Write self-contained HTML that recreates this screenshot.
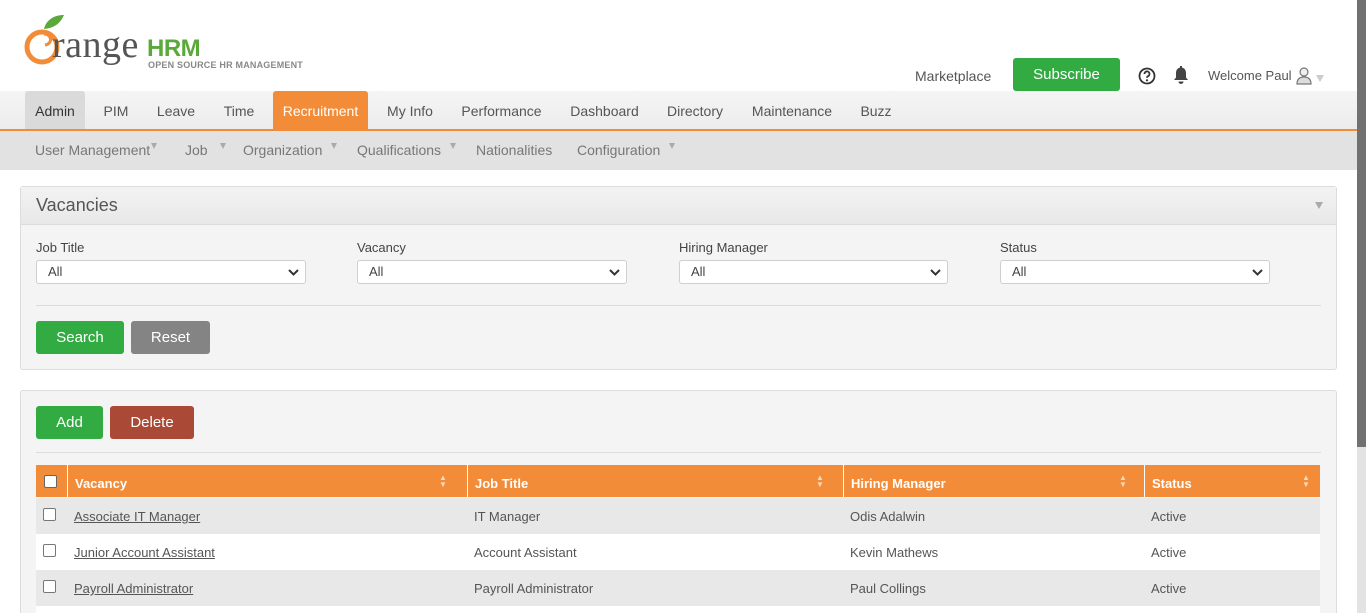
<!DOCTYPE html>
<html><head><meta charset="utf-8"><style>
*{box-sizing:border-box;margin:0;padding:0}
html,body{width:1366px;height:613px;overflow:hidden}
body{background:#fff;font-family:"Liberation Sans",Arial,sans-serif;position:relative;color:#444}
.a{position:absolute}
.menu{left:0;top:91px;width:1357px;height:38px;background:linear-gradient(#f5f5f5,#ececec)}
.menu span{position:absolute;top:0;height:38px;line-height:40px;font-size:14px;color:#555;text-align:center}
.oline{left:0;top:129px;width:1357px;height:2px;background:#f28c38}
.sub{left:0;top:131px;width:1357px;height:39px;background:#e2e2e2}
.sub > span{position:absolute;top:0;line-height:39px;font-size:14px;color:#777}
.tri{display:inline-block;width:0;height:0;border-left:3.5px solid transparent;border-right:3.5px solid transparent;border-top:6px solid #aaa;vertical-align:6px;margin-left:1px}
.panel{background:#f4f4f4;border:1px solid #dcdcdc;border-radius:3px}
.lbl{font-size:13px;color:#444}
.sel{height:24px;background:#fff;border:1px solid #cfcfcf;border-radius:3px;font-size:13px;color:#444;padding-left:11px;line-height:22px}
.sel svg{position:absolute;right:6px;top:8px}
.btn{color:#fff;font-size:15px;text-align:center;border-radius:3px;line-height:33px;height:33px}
.sa{font-size:8px;line-height:7px;color:#fbd9bc}
</style></head><body>
<!-- logo -->
<svg class="a" style="left:24px;top:12px" width="50" height="55" viewBox="0 0 50 55">
<path d="M20 17 C22 8 30 3 40 3 C36 12 30 16 20 17Z" fill="#5aa93a"/>
<circle cx="18" cy="35" r="15" fill="none" stroke="#f28c38" stroke-width="5"/>
<path d="M20 22 C28 22 29 32 21 33" fill="none" stroke="#f28c38" stroke-width="3"/>
</svg>
<div class="a" style="left:52px;top:23px;font-family:'Liberation Serif',serif;font-size:38px;color:#555;letter-spacing:0.5px">range</div>
<div class="a" style="left:147px;top:35px;font-size:24px;color:#5aa93a;font-weight:bold;letter-spacing:-0.5px">HRM</div>
<div class="a" style="left:148px;top:60px;font-size:9px;color:#888;font-weight:bold;letter-spacing:0.2px">OPEN SOURCE HR MANAGEMENT</div>

<div class="a" style="left:915px;top:68px;font-size:14px;color:#555">Marketplace</div>
<div class="a btn" style="left:1013px;top:58px;width:107px;height:33px;line-height:33px;background:#32ab42;font-size:15px">Subscribe</div>
<svg class="a" style="left:1138px;top:67px" width="18" height="18" viewBox="0 0 18 18"><circle cx="9" cy="9" r="7.5" fill="none" stroke="#333" stroke-width="1.8"/><path d="M6.5 7a2.5 2.5 0 1 1 3.5 2.2c-.8.4-1 .8-1 1.6" fill="none" stroke="#333" stroke-width="1.8"/><circle cx="9" cy="13.3" r="1.1" fill="#333"/></svg>
<svg class="a" style="left:1173px;top:66px" width="16" height="19" viewBox="0 0 16 19"><path d="M8 1.5c-3 0-5 2.3-5 5.5v4.5L1 14h14l-2-2.5V7c0-3.2-2-5.5-5-5.5z" fill="#444"/><rect x="7" y="0" width="2" height="2" fill="#444"/><path d="M5.5 15.5a2.5 2.5 0 0 0 5 0z" fill="#444"/></svg>
<div class="a" style="left:1208px;top:68px;font-size:13px;color:#555">Welcome Paul</div>
<svg class="a" style="left:1295px;top:66px" width="18" height="19" viewBox="0 0 18 19"><circle cx="9" cy="6" r="4" fill="#eee" stroke="#777" stroke-width="1.2"/><path d="M2 18c0-5 3-7 7-7s7 2 7 7z" fill="#ddd" stroke="#777" stroke-width="1.2"/></svg>
<div class="a" style="left:1316px;top:75px;width:0;height:0;border-left:4px solid transparent;border-right:4px solid transparent;border-top:7px solid #ccc"></div>

<div class="a menu">
<span style="left:25px;width:60px;background:#dadada;color:#333;border-radius:3px 3px 0 0">Admin</span>
<span style="left:96px;width:40px">PIM</span>
<span style="left:150px;width:52px">Leave</span>
<span style="left:216px;width:46px">Time</span>
<span style="left:273px;width:95px;background:#f28c38;color:#fff;border-radius:3px 3px 0 0">Recruitment</span>
<span style="left:380px;width:60px">My Info</span>
<span style="left:455px;width:93px">Performance</span>
<span style="left:563px;width:83px">Dashboard</span>
<span style="left:660px;width:70px">Directory</span>
<span style="left:745px;width:94px">Maintenance</span>
<span style="left:853px;width:46px">Buzz</span>
</div>
<div class="a oline"></div>
<div class="a sub">
<span style="left:35px">User Management<span class="tri"></span></span>
<span style="left:185px">Job &nbsp;&nbsp;<span class="tri"></span></span>
<span style="left:243px">Organization &nbsp;<span class="tri"></span></span>
<span style="left:357px">Qualifications &nbsp;<span class="tri"></span></span>
<span style="left:476px">Nationalities</span>
<span style="left:577px">Configuration &nbsp;<span class="tri"></span></span>
</div>

<!-- filter panel -->
<div class="a panel" style="left:20px;top:186px;width:1317px;height:184px"></div>
<div class="a" style="left:21px;top:187px;width:1315px;height:38px;background:linear-gradient(#f3f3f3,#e8e8e8);border-bottom:1px solid #dcdcdc"></div>
<div class="a" style="left:36px;top:195px;font-size:18px;color:#555">Vacancies</div>
<div class="a" style="left:1315px;top:202px;width:0;height:0;border-left:4px solid transparent;border-right:4px solid transparent;border-top:7px solid #aaa"></div>

<div class="a lbl" style="left:36px;top:240px">Job Title</div>
<div class="a lbl" style="left:357px;top:240px">Vacancy</div>
<div class="a lbl" style="left:679px;top:240px">Hiring Manager</div>
<div class="a lbl" style="left:1000px;top:240px">Status</div>
<div class="a sel" style="left:36px;top:260px;width:270px">All<svg width="11" height="8" viewBox="0 0 11 8"><path d="M1 1l4.5 4.5L10 1" fill="none" stroke="#333" stroke-width="2"/></svg></div>
<div class="a sel" style="left:357px;top:260px;width:270px">All<svg width="11" height="8" viewBox="0 0 11 8"><path d="M1 1l4.5 4.5L10 1" fill="none" stroke="#333" stroke-width="2"/></svg></div>
<div class="a sel" style="left:679px;top:260px;width:269px">All<svg width="11" height="8" viewBox="0 0 11 8"><path d="M1 1l4.5 4.5L10 1" fill="none" stroke="#333" stroke-width="2"/></svg></div>
<div class="a sel" style="left:1000px;top:260px;width:270px">All<svg width="11" height="8" viewBox="0 0 11 8"><path d="M1 1l4.5 4.5L10 1" fill="none" stroke="#333" stroke-width="2"/></svg></div>
<div class="a" style="left:36px;top:305px;width:1285px;height:1px;background:#dcdcdc"></div>
<div class="a btn" style="left:36px;top:321px;width:88px;background:#32ab42">Search</div>
<div class="a btn" style="left:131px;top:321px;width:79px;background:#848484">Reset</div>

<!-- list panel -->
<div class="a panel" style="left:20px;top:390px;width:1317px;height:240px"></div>
<div class="a btn" style="left:36px;top:406px;width:67px;background:#32ab42">Add</div>
<div class="a btn" style="left:110px;top:406px;width:84px;background:#aa4935">Delete</div>
<div class="a" style="left:36px;top:452px;width:1285px;height:1px;background:#dcdcdc"></div>

<div class="a" style="left:36px;top:465px;width:1284px;height:32px;background:#f28c38"></div>
<div class="a" style="left:67px;top:465px;width:1px;height:32px;background:#fff"></div>
<div class="a" style="left:467px;top:465px;width:1px;height:32px;background:#fff"></div>
<div class="a" style="left:843px;top:465px;width:1px;height:32px;background:#fff"></div>
<div class="a" style="left:1144px;top:465px;width:1px;height:32px;background:#fff"></div>
<div class="a" style="left:44px;top:475px;width:13px;height:13px;background:#fff;border:1px solid #666;border-radius:2px"></div>
<div class="a" style="left:75px;top:476px;font-size:13px;color:#fff;font-weight:bold">Vacancy</div>
<div class="a" style="left:475px;top:476px;font-size:13px;color:#fff;font-weight:bold">Job Title</div>
<div class="a" style="left:851px;top:476px;font-size:13px;color:#fff;font-weight:bold">Hiring Manager</div>
<div class="a" style="left:1152px;top:476px;font-size:13px;color:#fff;font-weight:bold">Status</div>
<div class="a sa" style="left:439px;top:474px">▲<br>▼</div>
<div class="a sa" style="left:816px;top:474px">▲<br>▼</div>
<div class="a sa" style="left:1119px;top:474px">▲<br>▼</div>
<div class="a sa" style="left:1302px;top:474px">▲<br>▼</div>

<div class="a" style="left:36px;top:498px;width:1284px;height:36px;background:#e8e8e8"></div>
<div class="a" style="left:36px;top:534px;width:1284px;height:36px;background:#fff"></div>
<div class="a" style="left:36px;top:570px;width:1284px;height:36px;background:#e8e8e8"></div>
<div class="a" style="left:36px;top:606px;width:1284px;height:10px;background:#fff"></div>

<div class="a" style="left:43px;top:508px;width:13px;height:13px;background:#fff;border:1px solid #777;border-radius:2px"></div>
<div class="a" style="left:43px;top:544px;width:13px;height:13px;background:#fff;border:1px solid #777;border-radius:2px"></div>
<div class="a" style="left:43px;top:580px;width:13px;height:13px;background:#fff;border:1px solid #777;border-radius:2px"></div>

<div class="a" style="left:74px;top:509px;font-size:13px;color:#555;text-decoration:underline">Associate IT Manager</div>
<div class="a" style="left:474px;top:509px;font-size:13px;color:#555">IT Manager</div>
<div class="a" style="left:850px;top:509px;font-size:13px;color:#555">Odis Adalwin</div>
<div class="a" style="left:1151px;top:509px;font-size:13px;color:#555">Active</div>

<div class="a" style="left:74px;top:545px;font-size:13px;color:#555;text-decoration:underline">Junior Account Assistant</div>
<div class="a" style="left:474px;top:545px;font-size:13px;color:#555">Account Assistant</div>
<div class="a" style="left:850px;top:545px;font-size:13px;color:#555">Kevin Mathews</div>
<div class="a" style="left:1151px;top:545px;font-size:13px;color:#555">Active</div>

<div class="a" style="left:74px;top:581px;font-size:13px;color:#555;text-decoration:underline">Payroll Administrator</div>
<div class="a" style="left:474px;top:581px;font-size:13px;color:#555">Payroll Administrator</div>
<div class="a" style="left:850px;top:581px;font-size:13px;color:#555">Paul Collings</div>
<div class="a" style="left:1151px;top:581px;font-size:13px;color:#555">Active</div>

<!-- scrollbar -->
<div class="a" style="left:1357px;top:0;width:9px;height:613px;background:#e3e3e3"></div>
<div class="a" style="left:1357px;top:0;width:9px;height:447px;background:#717171"></div>
</body></html>
